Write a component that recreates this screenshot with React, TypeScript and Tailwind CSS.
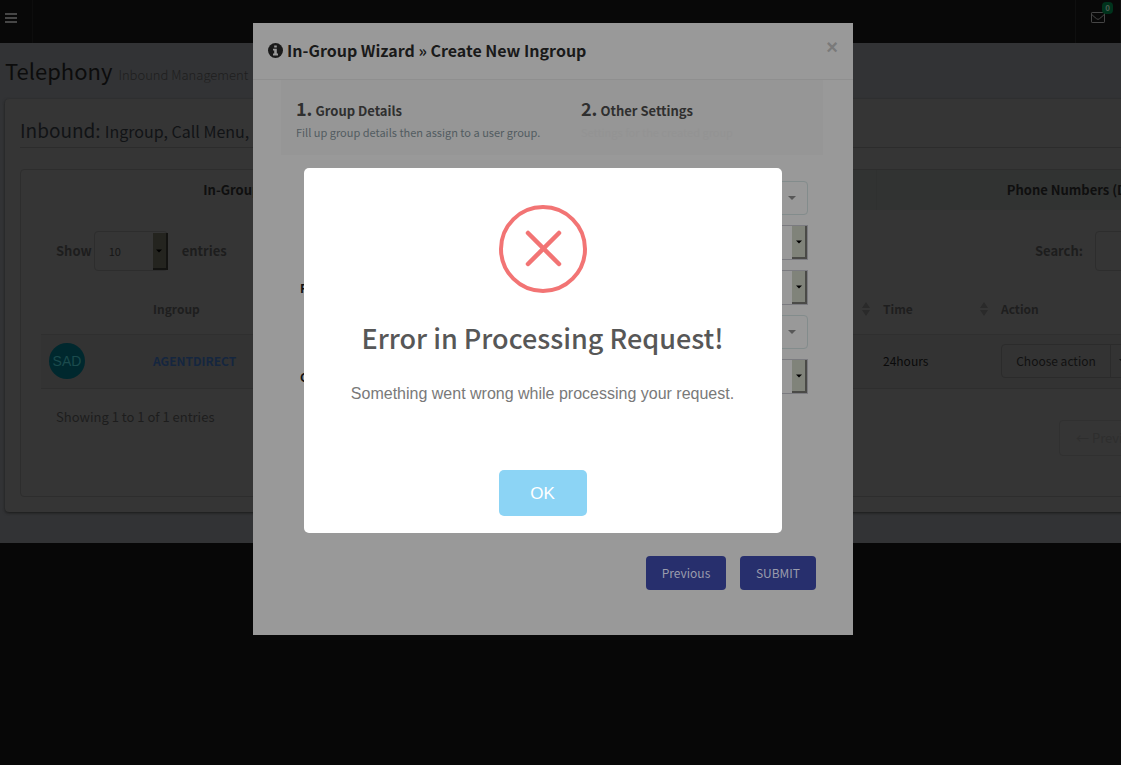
import React, { useState } from 'react';

interface Ingroup {
  id: string;
  initials: string;
  time: string;
}

interface Field {
  id: string;
  label: string;
  native: boolean;
}

const INGROUPS: Ingroup[] = [{ id: 'AGENTDIRECT', initials: 'SAD', time: '24hours' }];

const FIELDS: Field[] = [
  { id: 'web-form', label: '', native: false },
  { id: 'next-agent', label: '', native: true },
  { id: 'fronter', label: 'Fronter Display', native: true },
  { id: 'script', label: '', native: false },
  { id: 'call-launch', label: 'Get Call Launch', native: true },
];

function BarsIcon() {
  return (
    <svg viewBox="0 0 12 10" className="h-[10px] w-3" fill="currentColor" aria-hidden="true">
      <path d="M0 0h12v2H0zM0 4h12v2H0zM0 8h12v2H0z" />
    </svg>
  );
}

function EnvelopeIcon() {
  return (
    <svg viewBox="0 0 14 11" className="h-[11px] w-[14px]" fill="none" stroke="currentColor" aria-hidden="true">
      <rect x="0.5" y="0.5" width="13" height="10" rx="0.6" />
      <path d="M0.5 2.2C2 4 4 5.300 5.500 6.700Q7 8.100 8.500 6.700C10 5.300 12 4 13.500 2.200" />
    </svg>
  );
}

function InfoIcon() {
  return (
    <svg viewBox="0 0 15 15" className="size-[15px]" aria-hidden="true">
      <circle cx="7.5" cy="7.5" r="7.5" fill="currentColor" />
      <path d="M6.200 2.500h2.600v2H6.200zM5 5.700h3.800v4.900H10v1.900H5v-1.900h1.200V7.600H5z" fill="#999" />
    </svg>
  );
}

function Caret({ className }: { className?: string }) {
  return (
    <svg viewBox="0 0 8 4" className={`h-1 w-2 ${className ?? ''}`} fill="currentColor" aria-hidden="true">
      <path d="M0 0h8L4 4z" />
    </svg>
  );
}

function SortIcon() {
  return (
    <svg viewBox="0 0 8 14" className="h-[14px] w-2" fill="#2a2a2a" aria-hidden="true">
      <path d="M4 0l4 6H0zM0 8h8l-4 6z" />
    </svg>
  );
}

function TopBar() {
  return (
    <header className="flex h-[43px] items-stretch justify-between bg-[#080808] text-[#464646]">
      <button aria-label="Toggle navigation" className="flex w-[33px] items-start border-r border-[#0d0d0d] pl-[5px] pt-[13px]">
        <BarsIcon />
      </button>
      <button aria-label="Messages" className="relative flex w-[46px] items-start border-x border-[#0f0f0f] pl-[15px] pt-3">
        <EnvelopeIcon />
        <span className="absolute right-[7px] top-[2px] h-3 rounded-sm bg-[#00331c] px-[3px] text-[8px] font-bold leading-3 text-[#4d5a52]">0</span>
      </button>
    </header>
  );
}

function Tabs() {
  return (
    <div role="tablist" className="grid h-10 grid-cols-3 text-[13px] font-bold text-[#0f0f0f]">
      <button role="tab" aria-selected="true">In-Groups</button>
      <button role="tab" aria-selected="false" aria-label="Menus" className="border-r border-[#2f3130] bg-[#313332]" />
      <button role="tab" aria-selected="false" className="bg-[#313332]">Phone Numbers (DID/TFN)</button>
    </div>
  );
}

function IngroupTable() {
  return (
    <table className="mt-[13px] w-full table-fixed border-collapse text-left text-xs">
      <colgroup>
        <col className="w-[104px]" />
        <col className="w-[365px]" />
        <col className="w-[365px]" />
        <col className="w-[118px]" />
        <col />
      </colgroup>
      <thead>
        <tr className="h-[50px] border-b border-[#2f2f2f] text-[#1e1e1e]">
          <th />
          <th className="px-2 font-bold">Ingroup</th>
          <th className="px-[5px]">
            <div className="flex justify-end"><SortIcon /></div>
          </th>
          <th className="pl-2 pr-[5px] font-bold">
            <div className="flex items-center justify-between">Time<SortIcon /></div>
          </th>
          <th className="px-2 font-bold">Action</th>
        </tr>
      </thead>
      <tbody>
        {INGROUPS.map(g => (
          <tr key={g.id} className="h-[54px] border-b border-[#2e2e2e] bg-[#333]">
            <td className="px-2">
              <div className="flex size-9 items-center justify-center rounded-full bg-[#00282e] font-['Liberation_Sans',sans-serif] text-sm text-[#1b4b4d]">
                {g.initials}
              </div>
            </td>
            <td className="px-2 font-bold">
              <a href="#ingroup" className="text-[#15263f]">{g.id}</a>
            </td>
            <td />
            <td className="px-2 text-[#0a0a0a]">{g.time}</td>
            <td className="px-2">
              <div className="flex h-[34px] w-[142px] rounded-sm border border-[#2b2b2b] text-[#111]">
                <button className="w-[109px] border-r border-[#2b2b2b]">Choose action</button>
                <button aria-label="More actions" className="flex flex-1 items-center pl-2"><Caret /></button>
              </div>
            </td>
          </tr>
        ))}
      </tbody>
    </table>
  );
}

function InboundPage() {
  return (
    <main className="overflow-hidden bg-[#323335] pb-[31px] pl-[5px] pt-[10px]">
      <h1 className="flex h-[34px] items-baseline gap-[6px] whitespace-nowrap text-[22px] leading-[34px] text-[#0c0c0c]">
        Telephony
        <small className="text-[13px] font-light text-[#1e1e1e]">Inbound Management</small>
      </h1>
      <section className="mt-3 w-[1316px] rounded bg-[#353535] px-[15px] pb-[15px] pt-[15px] shadow-[0_1px_3px_#1a1a1a]">
        <h2 className="border-b border-[#2c2c2c] pb-[1px] text-[19px] leading-8 text-[#111315]">
          Inbound: <small className="text-base">Ingroup, Call Menu, Phone Numbers</small>
        </h2>
        <div className="mt-[21px] rounded-sm border border-[#2d2d2d]">
          <Tabs />
          <div className="px-5 pb-[40px] pt-[21px]">
            <div className="flex h-10 items-center justify-between pl-[15px] text-[13px] font-bold text-[#1d1d1d]">
              <div className="flex items-center">
                <label htmlFor="page-length">Show</label>
                <div className="relative ml-[2px]">
                  <select id="page-length" className="h-10 w-[74px] appearance-none rounded-sm border border-[#2d2d2d] bg-[#353535] pl-[14px] text-[11px] font-normal text-[#161616]">
                    <option>10</option>
                  </select>
                  <span className="pointer-events-none absolute bottom-px right-0 top-[2px] flex w-[15px] items-center justify-center border-b-2 border-r-2 border-[#131311] bg-[#24241f] text-black">
                    <Caret className="w-[6px]" />
                  </span>
                </div>
                <span className="ml-[14px]">entries</span>
              </div>
              <div className="flex items-center gap-3">
                <label htmlFor="search">Search:</label>
                <input id="search" type="search" className="h-10 w-[190px] rounded border border-[#2d2d2d] bg-transparent" />
              </div>
            </div>
            <IngroupTable />
            <div className="flex items-start justify-between pl-[15px] text-[13px]">
              <p className="mt-[18px] leading-5 text-[#1d1d1d]">Showing 1 to 1 of 1 entries</p>
              <div className="mt-[31px] flex h-9 w-[226px] rounded border border-[#303030] text-[#2e2e2e]">
                <button disabled className="px-4">← Previous</button>
              </div>
            </div>
          </div>
        </div>
      </section>
    </main>
  );
}

function WizardField({ field }: { field: Field }) {
  return (
    <div className="flex items-center justify-between">
      <label htmlFor={field.id} className="text-xs font-bold text-[#111]">{field.label}</label>
      <div className="relative">
        <select
          id={field.id}
          className={`block w-[377px] appearance-none border bg-[#999] ${
            field.native ? 'h-[35px] border-[#7b7b80]' : 'h-[34px] rounded-sm border-[#838c8c]'
          }`}
        />
        {field.native ? (
          <span className="pointer-events-none absolute bottom-px right-px top-px flex w-[15px] items-center justify-center border-b-2 border-r-2 border-[#4a4a47] bg-[#80837a] text-black">
            <Caret className="w-[6px]" />
          </span>
        ) : (
          <Caret className="pointer-events-none absolute right-3 top-[15px] text-[#585858]" />
        )}
      </div>
    </div>
  );
}

function WizardModal() {
  return (
    <div className="fixed inset-0 flex items-start justify-center pr-[15px] pt-[23px]">
      <div role="dialog" aria-labelledby="wizard-title" className="w-[600px] bg-[#999] pb-[45px]">
        <div className="flex h-[57px] items-start justify-between border-b border-[#8f8f8f] px-[15px]">
          <h4 id="wizard-title" className="flex items-center gap-1 pt-[15px] text-base font-bold leading-6 text-[#1a1a1a]">
            <InfoIcon />
            In-Group Wizard » Create New Ingroup
          </h4>
          <button aria-label="Close" className="pt-[14px] font-['Liberation_Sans',sans-serif] text-xl font-bold leading-5 text-[#7a7a7a]">×</button>
        </div>
        <div className="px-[28px]">
          <ol className="mr-[2px] grid h-[75px] grid-cols-[285px_1fr] bg-[#969696] px-[15px] pt-[15px] text-[13px] font-bold text-[#2f2f2f]">
            <li>
              <div className="leading-[27px]"><span className="text-lg leading-[26px]">1.</span> Group Details</div>
              <p className="text-[11px] font-normal leading-4 text-[#525c61]">Fill up group details then assign to a user group.</p>
            </li>
            <li>
              <div className="leading-[27px]"><span className="text-lg leading-[26px]">2.</span> Other Settings</div>
              <p className="text-[11px] font-normal leading-4 text-[#939393]">Settings for the created group</p>
            </li>
          </ol>
        </div>
        <form onSubmit={e => e.preventDefault()}>
          <div className="mt-[26px] flex flex-col gap-[10px] pl-[47px] pr-[45px]">
            {FIELDS.map(f => <WizardField key={f.id} field={f} />)}
          </div>
          <div className="mt-[162px] flex justify-end gap-[14px] pr-[37px] text-xs text-[#9a9cac]">
            <button type="button" className="h-[34px] w-20 rounded-sm bg-[#272f6d]">Previous</button>
            <button type="submit" className="h-[34px] w-[76px] rounded-sm bg-[#272f6d]">SUBMIT</button>
          </div>
        </form>
      </div>
    </div>
  );
}

function ErrorAlert({ onClose }: { onClose: () => void }) {
  return (
    <div
      role="alertdialog"
      aria-labelledby="alert-title"
      className="fixed left-1/2 top-[168px] -ml-[257px] flex w-[478px] flex-col items-center rounded-[5px] bg-white px-[17px] pb-[17px] pt-[37px]"
    >
      <svg viewBox="0 0 88 88" className="size-[88px]" fill="none" stroke="#f27474" strokeWidth="4" aria-hidden="true">
        <circle cx="44" cy="44" r="42" />
        <path d="M29 28l31 31M60 28l-31 31" strokeWidth="4.5" strokeLinecap="round" />
      </svg>
      <h2 id="alert-title" className="mt-[25px] text-[27px] font-medium leading-10 text-[#575757]">Error in Processing Request!</h2>
      <p className="mt-6 font-['Liberation_Sans',sans-serif] text-base text-[#797979]">
        Something went wrong while processing your request.
      </p>
      <button
        onClick={onClose}
        className="mt-16 h-[46px] w-[88px] rounded-[5px] bg-[#8cd4f5] pt-px font-['Liberation_Sans',sans-serif] text-[17px] text-white"
      >
        OK
      </button>
    </div>
  );
}

export default function App() {
  const [alertOpen, setAlertOpen] = useState(true);

  return (
    <div className="min-h-screen overflow-hidden bg-[#070707] font-['Noto_Sans_CJK_SC',sans-serif]">
      <TopBar />
      <InboundPage />
      <WizardModal />
      {alertOpen && <ErrorAlert onClose={() => setAlertOpen(false)} />}
    </div>
  );
}
